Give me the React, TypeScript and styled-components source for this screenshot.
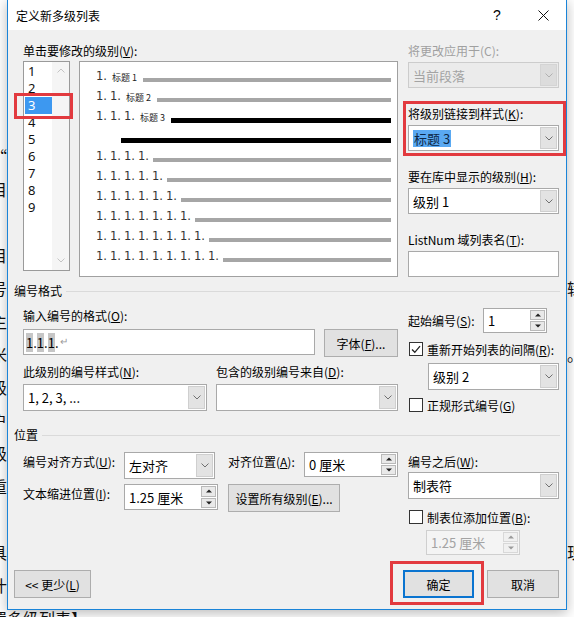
import React from 'react';
import styled, { createGlobalStyle, css } from 'styled-components';

const GlobalStyle = createGlobalStyle`
  html, body { margin: 0; padding: 0; background: #fff; overflow: hidden; }
  body { font-family: "Noto Sans CJK SC", "Microsoft YaHei", sans-serif; }
  * { box-sizing: border-box; }
`;

const UI = `"Noto Sans CJK SC", "Microsoft YaHei", sans-serif`;
const RED = '#e23a3f';

const Desktop = styled.div`
  position: relative;
  width: 574px;
  height: 617px;
  overflow: hidden;
  background: #fff;
`;

const Doc = styled.div`
  display: flex;
  flex-direction: column;
  padding-top: 140px;
  font-family: ${UI};
  font-size: 16px;
  color: #111;
`;

const DocLine = styled.div`
  height: 33px;
  line-height: 33px;
  display: flex;
  justify-content: space-between;
  margin: 0 -9px;
`;

const Dialog = styled.section`
  position: absolute;
  left: 7px;
  top: -1px;
  width: 560px;
  height: 611px;
  border: 1px solid #1a84d8;
  background: #f0f0f0;
  display: flex;
  flex-direction: column;
  box-shadow: 0 3px 12px rgba(0, 0, 0, 0.28);
  font-family: ${UI};
  font-size: 12px;
  color: #000;
`;

const TitleBar = styled.header`
  height: 30px;
  flex: none;
  background: #fff;
  display: flex;
  align-items: center;
  padding-left: 8px;
`;

const TitleText = styled.span`
  flex: 1;
  font-size: 12px;
  line-height: 30px;
  padding-top: 1px;
`;

const TitleButton = styled.span`
  width: 46px;
  height: 30px;
  display: flex;
  align-items: center;
  justify-content: center;
  font-size: 14px;
  font-family: "Liberation Sans", sans-serif;
`;

const Body = styled.div`
  flex: 1;
  display: flex;
  flex-direction: column;
  padding: 12px 6px 11px 6px;
`;

const TwoCol = styled.div<{ mt?: number }>`
  display: grid;
  grid-template-columns: 384px 151px;
  column-gap: 10px;
  margin-top: ${p => p.mt ?? 0}px;
`;

const LeftCol = styled.div`
  padding-left: 9px;
  display: flex;
  flex-direction: column;
`;

const RightCol = styled.div`
  display: flex;
  flex-direction: column;
`;

const Label = styled.div<{ disabled?: boolean; mt?: number; mb?: number; w?: number; lh?: number; ml?: number }>`
  line-height: ${p => p.lh ?? 18}px;
  height: ${p => p.lh ?? 18}px;
  white-space: nowrap;
  color: ${p => (p.disabled ? '#a0a0a0' : '#000')};
  margin-top: ${p => p.mt ?? 0}px;
  margin-bottom: ${p => p.mb ?? 0}px;
  margin-left: ${p => p.ml ?? 0}px;
  ${p => p.w && css`width: ${p.w}px; flex: none;`}
  u { text-decoration: underline; text-underline-offset: 1px; }
`;

const Group = styled.div<{ mt?: number }>`
  display: flex;
  flex-direction: column;
  margin-top: ${p => p.mt ?? 0}px;
`;

const Annotated = styled.div`
  display: flex;
  flex-direction: column;
  margin: -4px -7px -5px -5px;
  padding: 1px 4px 2px 2px;
  border: 3px solid ${RED};
`;

const Field = styled.div<{ w?: number; h?: number; disabled?: boolean; mt?: number; ml?: number }>`
  width: ${p => (p.w ? `${p.w}px` : '100%')};
  height: ${p => p.h ?? 26}px;
  flex: none;
  background: ${p => (p.disabled ? '#ebebeb' : '#fff')};
  border: 1px solid ${p => (p.disabled ? '#cccccc' : '#a9a9a9')};
  display: flex;
  align-items: stretch;
  margin-top: ${p => p.mt ?? 0}px;
  margin-left: ${p => p.ml ?? 0}px;
`;

const FieldText = styled.span<{ disabled?: boolean; pl?: number }>`
  flex: 1;
  display: flex;
  align-items: center;
  padding-left: ${p => p.pl ?? 4}px;
  font-size: 13px;
  white-space: nowrap;
  overflow: hidden;
  color: ${p => (p.disabled ? '#a3a3a3' : '#000')};
`;

const Selected = styled.span`
  background: #5aa9f2;
  color: #0d2746;
  padding: 0 1px;
  line-height: 17px;
`;

const Shade = styled.span`
  background: #c6c6c6;
`;

const Pilcrow = styled.span`
  color: #9a9a9a;
  font-size: 10px;
  margin-left: 1px;
  align-self: flex-start;
  margin-top: 3px;
`;

const DropBtn = styled.span<{ disabled?: boolean }>`
  width: 17px;
  margin: 1px;
  flex: none;
  background: ${p => (p.disabled ? '#dcdcdc' : '#e3e3e3')};
  border: 1px solid ${p => (p.disabled ? '#d4d4d4' : '#cfcfcf')};
  display: flex;
  align-items: center;
  justify-content: center;
`;

const SpinBtns = styled.span`
  width: 15px;
  flex: none;
  margin: 1px 1px 1px 0;
  display: flex;
  flex-direction: column;
  gap: 1px;
`;

const SpinBtn = styled.span<{ disabled?: boolean }>`
  flex: 1;
  background: ${p => (p.disabled ? '#f0f0f0' : '#e9e9e9')};
  border: 1px solid ${p => (p.disabled ? '#d8d8d8' : '#b9b9b9')};
  display: flex;
  align-items: center;
  justify-content: center;
`;

const Button = styled.button<{ w: number; h?: number; primary?: boolean; ml?: number }>`
  width: ${p => p.w}px;
  height: ${p => p.h ?? 28}px;
  flex: none;
  margin: 0 0 0 ${p => p.ml ?? 0}px;
  padding: 0;
  background: #e1e1e1;
  border: 1px solid #adadad;
  font-family: ${UI};
  font-size: 12px;
  color: #000;
  white-space: nowrap;
  ${p => p.primary && css`border: 2px solid #0a74d0;`}
  u { text-decoration: underline; text-underline-offset: 1px; }
`;

const Row = styled.div<{ mt?: number; ml?: number }>`
  display: flex;
  align-items: flex-start;
  margin-top: ${p => p.mt ?? 0}px;
  margin-left: ${p => p.ml ?? 0}px;
`;

const CenterRow = styled(Row)`
  align-items: center;
`;

const CheckRow = styled.label<{ mt?: number }>`
  display: flex;
  align-items: center;
  gap: 4px;
  height: 18px;
  margin-top: ${p => p.mt ?? 0}px;
  margin-left: 1px;
  white-space: nowrap;
  u { text-decoration: underline; text-underline-offset: 1px; }
`;

const CheckBox = styled.span`
  width: 14px;
  height: 14px;
  flex: none;
  border: 1px solid #333;
  background: #fff;
  display: flex;
  align-items: center;
  justify-content: center;
`;

const SectionHeader = styled.div<{ mt?: number }>`
  display: flex;
  align-items: center;
  gap: 4px;
  line-height: 16px;
  height: 16px;
  margin-top: ${p => p.mt ?? 0}px;
  &::after {
    content: '';
    flex: 1;
    height: 1px;
    background: #dadada;
    margin-top: 1px;
  }
`;

/* level list */
const LevelArea = styled.div`
  display: flex;
  gap: 9px;
  align-items: flex-start;
  margin-top: 1px;
`;

const LevelList = styled.div`
  position: relative;
  width: 47px;
  height: 210px;
  flex: none;
  border: 1px solid #9a9a9a;
  background: #fff;
  display: flex;
`;

const LevelItems = styled.ul`
  list-style: none;
  margin: 0;
  padding: 1px 0 0 1px;
  flex: 1;
  display: flex;
  flex-direction: column;
`;

const LevelItem = styled.li<{ selected?: boolean }>`
  height: 17px;
  line-height: 17px;
  padding-left: 3px;
  font-size: 13px;
  font-family: "Noto Sans", ${UI};
  color: ${p => (p.selected ? '#fff' : '#111')};
  background: ${p => (p.selected ? '#3d98f0' : 'transparent')};
`;

const ItemMark = styled.span`
  position: absolute;
  left: -10px;
  top: 31px;
  width: 59px;
  height: 26px;
  border: 3px solid ${RED};
  pointer-events: none;
`;

const ScrollTrack = styled.div`
  width: 17px;
  flex: none;
  background: #f5f5f5;
  display: flex;
  flex-direction: column;
  justify-content: space-between;
  align-items: center;
  padding: 6px 0 7px;
`;

const Preview = styled.div`
  width: 319px;
  height: 216px;
  flex: none;
  background: #fff;
  border: 1px solid #a0a0a0;
  padding: 4px 6px 0 16px;
  display: flex;
  flex-direction: column;
`;

const PreviewRow = styled.div<{ indent?: number }>`
  height: 20px;
  display: flex;
  align-items: center;
  padding-left: ${p => p.indent ?? 0}px;
`;

const NumGroup = styled.span`
  width: 14px;
  flex: none;
  font-family: "DejaVu Sans", "Liberation Sans", sans-serif;
  font-size: 11.5px;
  color: #333;
  white-space: nowrap;
`;

const HeadingTag = styled.span`
  width: 32px;
  flex: none;
  font-size: 9px;
  padding-left: 2px;
  white-space: nowrap;
  color: #222;
  margin-top: 2px;
`;

const Bar = styled.span<{ dark?: boolean }>`
  flex: 1;
  margin-left: 1px;
  height: ${p => (p.dark ? 5 : 4)}px;
  margin-top: 8px;
  background: ${p => (p.dark ? '#000' : '#a6a6a6')};
`;

const Footer = styled.div`
  margin-top: auto;
  display: flex;
  justify-content: space-between;
  align-items: center;
`;

const FooterRight = styled.div`
  display: flex;
  gap: 13px;
  margin-right: 1px;
`;

const OkWrap = styled.div`
  position: relative;
`;

const OkMark = styled.span`
  position: absolute;
  left: -13px;
  top: -9px;
  right: -10px;
  bottom: -7px;
  border: 3px solid ${RED};
  pointer-events: none;
`;

const Chevron = ({ up, color = '#707070' }: { up?: boolean; color?: string }) => (
  <svg width="8" height="5" viewBox="0 0 8 5">
    <polyline
      points={up ? '0.5,4.5 4,1 7.5,4.5' : '0.5,0.5 4,4 7.5,0.5'}
      fill="none"
      stroke={color}
      strokeWidth="1"
    />
  </svg>
);

const Tri = ({ up, color = '#222' }: { up?: boolean; color?: string }) => (
  <svg width="6" height="4" viewBox="0 0 6 4">
    <polygon points={up ? '0,3.5 3,0.5 6,3.5' : '0,0.5 3,3.5 6,0.5'} fill={color} />
  </svg>
);

const Combo = ({
  text,
  w,
  h,
  disabled,
  mt,
  ml,
  children,
}: {
  text?: string;
  w?: number;
  h?: number;
  disabled?: boolean;
  mt?: number;
  ml?: number;
  children?: React.ReactNode;
}) => (
  <Field w={w} h={h} disabled={disabled} mt={mt} ml={ml}>
    <FieldText disabled={disabled}>{children ?? text}</FieldText>
    <DropBtn disabled={disabled}>
      <Chevron color={disabled ? '#b0b0b0' : '#707070'} />
    </DropBtn>
  </Field>
);

const Spin = ({
  text,
  w,
  h,
  disabled,
  mt,
  ml,
}: {
  text: string;
  w?: number;
  h?: number;
  disabled?: boolean;
  mt?: number;
  ml?: number;
}) => (
  <Field w={w} h={h ?? 25} mt={mt} ml={ml} style={disabled ? { background: '#f4f4f4', borderColor: '#cfcfcf' } : undefined}>
    <FieldText disabled={disabled}>{text}</FieldText>
    <SpinBtns>
      <SpinBtn disabled={disabled}>
        <Tri up color={disabled ? '#9a9a9a' : '#222'} />
      </SpinBtn>
      <SpinBtn disabled={disabled}>
        <Tri color={disabled ? '#9a9a9a' : '#222'} />
      </SpinBtn>
    </SpinBtns>
  </Field>
);

const Check = ({ checked }: { checked?: boolean }) => (
  <CheckBox>
    {checked && (
      <svg width="10" height="9" viewBox="0 0 10 9">
        <polyline points="1,4.5 3.8,7.3 9,1.2" fill="none" stroke="#222" strokeWidth="1.3" />
      </svg>
    )}
  </CheckBox>
);

const previewRows: { n: number; tag?: string; dark?: boolean; indent?: number }[] = [
  { n: 1, tag: '标题 1' },
  { n: 2, tag: '标题 2' },
  { n: 3, tag: '标题 3', dark: true },
  { n: 0, dark: true, indent: 24 },
  { n: 4 },
  { n: 5 },
  { n: 6 },
  { n: 7 },
  { n: 8 },
  { n: 9 },
];

const docLines: [string, string][] = [
  ['“', ''],
  ['目', ''],
  ['。', ''],
  ['目', ''],
  ['号', '辑'],
  ['主', ''],
  ['米', '。'],
  ['级', ''],
  ['户', ''],
  ['级', '3'],
  ['重', ''],
  ['', ''],
  ['具', '现'],
  ['什', ''],
  ['置多级列表】', ''],
];

export default function App() {
  return (
    <Desktop>
      <GlobalStyle />
      <Doc>
        {docLines.map(([l, r], i) => (
          <DocLine key={i}>
            <span>{l}</span>
            <span>{r}</span>
          </DocLine>
        ))}
      </Doc>

      <Dialog>
        <TitleBar>
          <TitleText>定义新多级列表</TitleText>
          <TitleButton>?</TitleButton>
          <TitleButton>
            <svg width="11" height="11" viewBox="0 0 11 11">
              <path d="M0.5 0.5 L10.5 10.5 M10.5 0.5 L0.5 10.5" stroke="#111" strokeWidth="1" />
            </svg>
          </TitleButton>
        </TitleBar>

        <Body>
          <TwoCol>
            <LeftCol>
              <Label>
                单击要修改的级别(<u>V</u>):
              </Label>
              <LevelArea>
                <LevelList>
                  <LevelItems>
                    {[1, 2, 3, 4, 5, 6, 7, 8, 9].map(n => (
                      <LevelItem key={n} selected={n === 3}>
                        {n}
                      </LevelItem>
                    ))}
                  </LevelItems>
                  <ScrollTrack>
                    <Chevron up color="#c4c4c4" />
                    <Chevron color="#c4c4c4" />
                  </ScrollTrack>
                  <ItemMark />
                </LevelList>
                <Preview>
                  {previewRows.map((r, i) => (
                    <PreviewRow key={i} indent={r.indent}>
                      {Array.from({ length: r.n }).map((_, j) => (
                        <NumGroup key={j}>1.</NumGroup>
                      ))}
                      {r.tag && <HeadingTag>{r.tag}</HeadingTag>}
                      <Bar dark={r.dark} />
                    </PreviewRow>
                  ))}
                </Preview>
              </LevelArea>
            </LeftCol>

            <RightCol>
              <Group>
                <Label disabled mb={2}>
                  将更改应用于(C):
                </Label>
                <Combo text="当前段落" disabled />
              </Group>
              <Group mt={17}>
                <Annotated>
                  <Label mb={2}>
                    将级别链接到样式(<u>K</u>):
                  </Label>
                  <Combo>
                    <Selected>标题 3</Selected>
                  </Combo>
                </Annotated>
              </Group>
              <Group mt={17}>
                <Label mb={2}>
                  要在库中显示的级别(<u>H</u>):
                </Label>
                <Combo text="级别 1" />
              </Group>
              <Group mt={17}>
                <Label mb={2}>
                  ListNum 域列表名(<u>T</u>):
                </Label>
                <Field />
              </Group>
            </RightCol>
          </TwoCol>

          <SectionHeader mt={6}>编号格式</SectionHeader>

          <TwoCol mt={8}>
            <LeftCol>
              <Label mb={4}>
                输入编号的格式(<u>O</u>):
              </Label>
              <Row>
                <Field w={292}>
                  <FieldText pl={2}>
                    <Shade>1</Shade>.<Shade>1</Shade>.<Shade>1</Shade>.<Pilcrow>↵</Pilcrow>
                  </FieldText>
                </Field>
                <Button w={74} ml={9}>
                  字体(<u>F</u>)...
                </Button>
              </Row>
              <Row mt={6}>
                <Group>
                  <Label mb={3}>
                    此级别的编号样式(<u>N</u>):
                  </Label>
                  <Combo text="1, 2, 3, ..." w={184} h={27} />
                </Group>
                <Group style={{ marginLeft: 9 }}>
                  <Label mb={3}>
                    包含的级别编号来自(<u>D</u>):
                  </Label>
                  <Combo text="" w={182} h={27} />
                </Group>
              </Row>
            </LeftCol>

            <RightCol>
              <CenterRow mt={1}>
                <Label w={75}>
                  起始编号(<u>S</u>):
                </Label>
                <Spin text="1" w={64} />
              </CenterRow>
              <CheckRow mt={7}>
                <Check checked />
                <span>
                  重新开始列表的间隔(<u>R</u>):
                </span>
              </CheckRow>
              <Combo text="级别 2" mt={5} ml={20} w={131} h={27} />
              <CheckRow mt={6}>
                <Check />
                <span>
                  正规形式编号(<u>G</u>)
                </span>
              </CheckRow>
            </RightCol>
          </TwoCol>

          <SectionHeader mt={13}>位置</SectionHeader>

          <TwoCol mt={9}>
            <LeftCol>
              <Row>
                <Label w={101} lh={20}>
                  编号对齐方式(<u>U</u>):
                </Label>
                <Combo text="左对齐" w={91} h={27} />
                <Label w={76} lh={20} ml={13}>
                  对齐位置(<u>A</u>):
                </Label>
                <Spin text="0 厘米" w={94} />
              </Row>
              <Row mt={5}>
                <Label w={101} lh={20}>
                  文本缩进位置(<u>I</u>):
                </Label>
                <Spin text="1.25 厘米" w={94} h={26} />
                <Button w={112} ml={10}>
                  设置所有级别(<u>E</u>)...
                </Button>
              </Row>
            </LeftCol>

            <RightCol>
              <Label mt={1}>
                编号之后(<u>W</u>):
              </Label>
              <Combo text="制表符" mt={1} h={27} />
              <CheckRow mt={9}>
                <Check />
                <span>
                  制表位添加位置(<u>B</u>):
                </span>
              </CheckRow>
              <Spin text="1.25 厘米" disabled w={94} mt={4} ml={18} />
            </RightCol>
          </TwoCol>

          <Footer>
            <Button w={77}>
              {'<< 更少('}
              <u>L</u>)
            </Button>
            <FooterRight>
              <OkWrap>
                <Button w={71} primary>
                  确定
                </Button>
                <OkMark />
              </OkWrap>
              <Button w={72}>取消</Button>
            </FooterRight>
          </Footer>
        </Body>
      </Dialog>
    </Desktop>
  );
}
